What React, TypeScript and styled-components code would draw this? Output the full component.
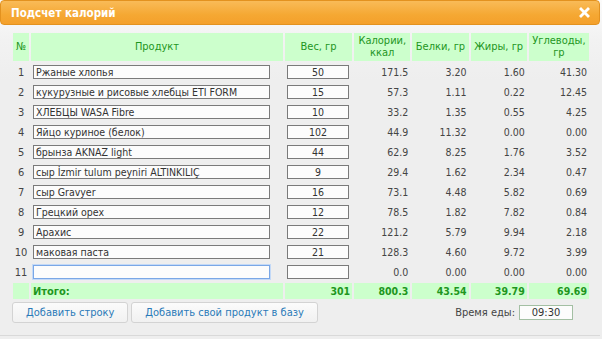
import React from "react";
import styled, { createGlobalStyle } from "styled-components";

const Global = createGlobalStyle`
  html, body { margin: 0; padding: 0; background: #eeeeee; }
  body { font-family: "DejaVu Sans Condensed", "DejaVu Sans", sans-serif; font-size: 11px; color: #333; }
  * { box-sizing: border-box; }
`;

const Dialog = styled.div`
  width: 602px;
  height: 339px;
  background: linear-gradient(#fbfbfb 0px, #f2f2f2 40px, #eeeeee 80px);
  display: flex;
  flex-direction: column;
`;

const TitleBar = styled.div`
  height: 25px;
  margin-right: 2px;
  background: linear-gradient(#f9bb58, #f5a833 60%, #f4a02b);
  border: 1px solid #e3921f;
  border-radius: 4px;
  display: flex;
  align-items: center;
  justify-content: space-between;
  padding: 0 9px 0 10px;
  color: #fff;
  font-weight: bold;
  font-size: 11.5px;
`;

const Close = styled.svg`
  width: 11px;
  height: 11px;
  display: block;
`;

const Body = styled.div`
  padding: 6px 13px 0 11px;
  flex: 1;
  display: flex;
  flex-direction: column;
`;

const Table = styled.table`
  border-collapse: separate;
  border-spacing: 2px;
  table-layout: fixed;
  width: 580px;
`;

const Th = styled.th<{ $w: number }>`
  width: ${(p) => p.$w}px;
  height: 28px;
  padding: 0 1px;
  background: #ccffcc;
  color: #1e961e;
  font-weight: normal;
  text-align: center;
  line-height: 12px;
`;

const NumCell = styled.td`
  height: 18px;
  padding: 0;
  text-align: center;
  color: #444;
`;

const InputCell = styled.td`
  height: 18px;
  padding: 0 0 0 2px;
  text-align: left;
`;

const ValueCell = styled.td`
  height: 18px;
  padding: 0 2px;
  text-align: right;
  color: #444;
  white-space: nowrap;
  font-size: 10.5px;
`;

const TotalCell = styled.td`
  height: 16px;
  padding: 0 2px;
  background: #ccffcc;
  color: #1e961e;
  font-weight: bold;
  text-align: right;
  white-space: nowrap;
  font-size: 10.5px;
`;

const TotalLabelCell = styled.td`
  height: 16px;
  padding: 0 2px;
  background: #ccffcc;
  color: #1e961e;
  font-weight: bold;
  font-size: 11px;
  text-align: left;
`;

const TextInput = styled.input<{ $w: number; $focus?: boolean; $center?: boolean }>`
  display: block;
  width: ${(p) => p.$w}px;
  height: 14px;
  margin: 0;
  padding: 0 2px;
  border: 1px solid ${(p) => (p.$focus ? "#7aa7e6" : "#7a7a7a")};
  box-shadow: ${(p) => (p.$focus ? "0 0 0 1px #c3d9f7" : "none")};
  background: #fcfcfc;
  font-family: inherit;
  font-size: 10.5px;
  color: #333;
  text-align: ${(p) => (p.$center ? "center" : "left")};
  outline: none;
`;

const Footer = styled.div`
  display: flex;
  align-items: center;
  gap: 3px;
  padding: 1px 0 0 1px;
`;

const Button = styled.button`
  height: 21px;
  padding: 0 13px;
  border: 1px solid #d3d3d3;
  border-radius: 3px;
  background: linear-gradient(#fbfbfb, #f1f1f1);
  color: #2a7ab8;
  font-family: inherit;
  font-size: 11px;
`;

const TimeBox = styled.div`
  margin-left: auto;
  margin-right: 16px;
  display: flex;
  align-items: center;
  gap: 4px;
  color: #444;
`;

const TimeInput = styled.input`
  width: 54px;
  height: 15px;
  border: 1px solid #a3bfa3;
  background: #fcfcfc;
  text-align: center;
  font-family: inherit;
  font-size: 11px;
  color: #333;
  outline: none;
`;

const BottomLine = styled.div`
  margin-top: auto;
  margin-right: 2px;
  height: 4px;
  border-top: 1px solid #d9d9d9;
`;

const rows: [string, string, string, string, string, string][] = [
  ["Ржаные хлопья", "50", "171.5", "3.20", "1.60", "41.30"],
  ["кукурузные и рисовые хлебцы ETI FORM", "15", "57.3", "1.11", "0.22", "12.45"],
  ["ХЛЕБЦЫ WASA Fibre", "10", "33.2", "1.35", "0.55", "4.25"],
  ["Яйцо куриное (белок)", "102", "44.9", "11.32", "0.00", "0.00"],
  ["брынза AKNAZ light", "44", "62.9", "8.25", "1.76", "3.52"],
  ["сыр İzmir tulum peyniri ALTINKILIÇ", "9", "29.4", "1.62", "2.34", "0.47"],
  ["сыр Gravyer", "16", "73.1", "4.48", "5.82", "0.69"],
  ["Грецкий орех", "12", "78.5", "1.82", "7.82", "0.84"],
  ["Арахис", "22", "121.2", "5.79", "9.94", "2.18"],
  ["маковая паста", "21", "128.3", "4.60", "9.72", "3.99"],
  ["", "", "0.0", "0.00", "0.00", "0.00"],
];

export default function App() {
  return (
    <>
      <Global />
      <Dialog>
        <TitleBar>
          <span>Подсчет калорий</span>
          <Close viewBox="0 0 11 11">
            <path d="M2 2 L9 9 M9 2 L2 9" stroke="#fff" strokeWidth="2.8" strokeLinecap="square" />
          </Close>
        </TitleBar>
        <Body>
          <Table>
            <thead>
              <tr>
                <Th $w={16}>№</Th>
                <Th $w={251}>Продукт</Th>
                <Th $w={67}>Вес, гр</Th>
                <Th $w={56}>Калории, ккал</Th>
                <Th $w={56}>Белки, гр</Th>
                <Th $w={56}>Жиры, гр</Th>
                <Th $w={60}>Углеводы, гр</Th>
              </tr>
            </thead>
            <tbody>
              {rows.map((r, i) => (
                <tr key={i}>
                  <NumCell>{i + 1}</NumCell>
                  <InputCell>
                    <TextInput $w={237} $focus={i === 10} defaultValue={r[0]} />
                  </InputCell>
                  <InputCell>
                    <TextInput $w={62} $center defaultValue={r[1]} />
                  </InputCell>
                  <ValueCell>{r[2]}</ValueCell>
                  <ValueCell>{r[3]}</ValueCell>
                  <ValueCell>{r[4]}</ValueCell>
                  <ValueCell>{r[5]}</ValueCell>
                </tr>
              ))}
              <tr>
                <TotalCell />
                <TotalLabelCell>Итого:</TotalLabelCell>
                <TotalCell>301</TotalCell>
                <TotalCell>800.3</TotalCell>
                <TotalCell>43.54</TotalCell>
                <TotalCell>39.79</TotalCell>
                <TotalCell>69.69</TotalCell>
              </tr>
            </tbody>
          </Table>
          <Footer>
            <Button>Добавить строку</Button>
            <Button>Добавить свой продукт в базу</Button>
            <TimeBox>
              <span>Время еды:</span>
              <TimeInput defaultValue="09:30" />
            </TimeBox>
          </Footer>
        </Body>
        <BottomLine />
      </Dialog>
    </>
  );
}
